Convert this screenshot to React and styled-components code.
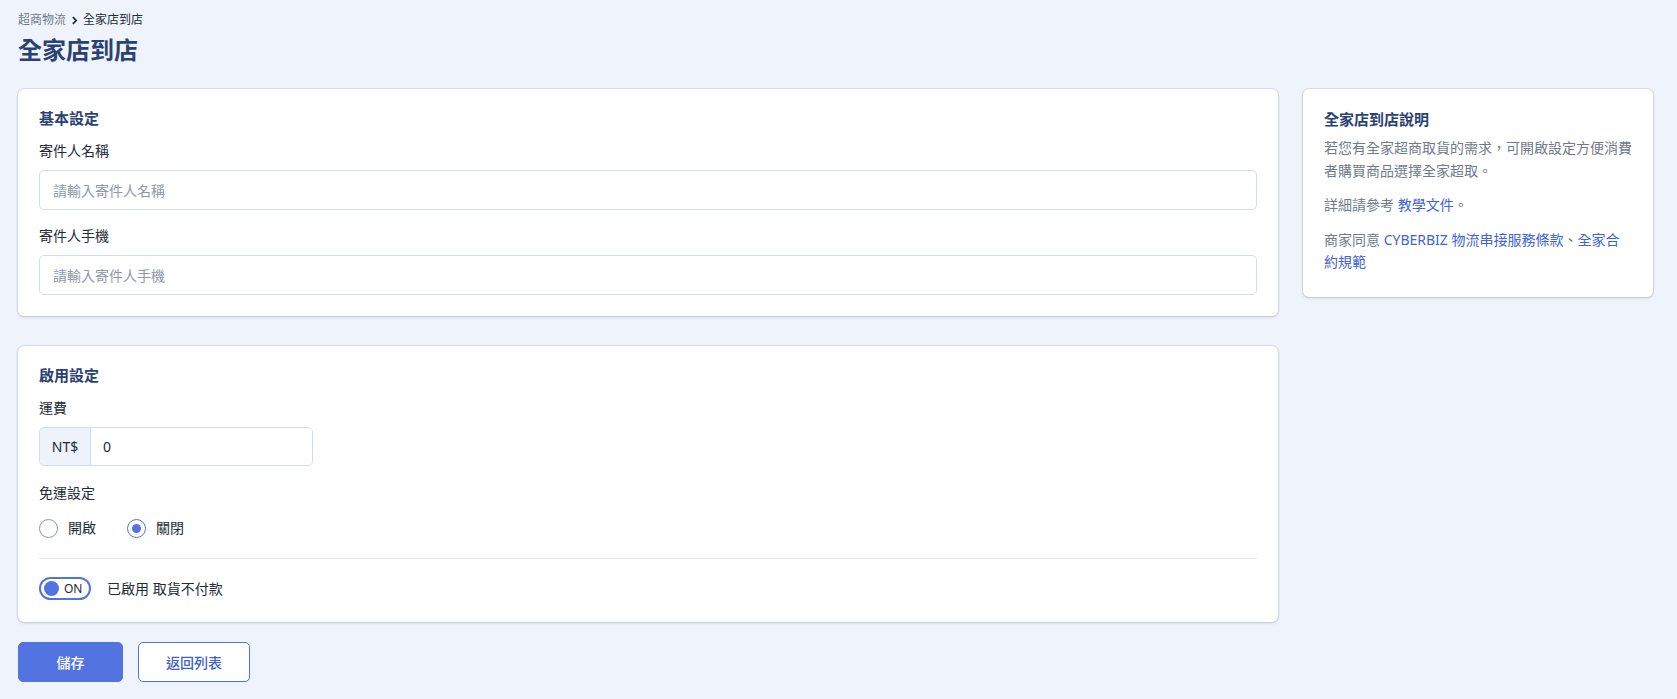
import React from 'react';
import styled, { createGlobalStyle } from 'styled-components';

const GlobalStyle = createGlobalStyle`
  * {
    box-sizing: border-box;
  }
  body {
    margin: 0;
    background: #eff4fc;
    font-family: "Noto Sans", "Noto Sans CJK TC", sans-serif;
    color: #222b38;
  }
`;

const App = () => {
  return (
    <>
      <GlobalStyle />
      <Page>
        <Breadcrumb>
          <CrumbLink href="#">超商物流</CrumbLink>
          <Chevron viewBox="0 0 10 10">
            <path d="M3.5 2 L6.5 5 L3.5 8" />
          </Chevron>
          <span>全家店到店</span>
        </Breadcrumb>
        <Title>全家店到店</Title>
        <Layout>
          <MainColumn>
            <Card>
              <CardTitle>基本設定</CardTitle>
              <Field $gap={10}>
                <Label>寄件人名稱</Label>
                <TextInput placeholder="請輸入寄件人名稱" />
              </Field>
              <Field $gap={15}>
                <Label>寄件人手機</Label>
                <TextInput placeholder="請輸入寄件人手機" />
              </Field>
            </Card>

            <Card $bottom={22}>
              <CardTitle>啟用設定</CardTitle>
              <Field>
                <Label>運費</Label>
                <InputGroup>
                  <Addon>NT$</Addon>
                  <GroupInput defaultValue="0" />
                </InputGroup>
              </Field>
              <Field $gap={16}>
                <Label>免運設定</Label>
                <RadioRow>
                  <RadioOption>
                    <RadioCircle />
                    開啟
                  </RadioOption>
                  <RadioOption>
                    <RadioCircle $checked />
                    關閉
                  </RadioOption>
                </RadioRow>
              </Field>
              <Divider />
              <ToggleRow>
                <Toggle>
                  <Knob />
                  ON
                </Toggle>
                <span>已啟用 取貨不付款</span>
              </ToggleRow>
            </Card>

            <Actions>
              <PrimaryButton>儲存</PrimaryButton>
              <OutlineButton>返回列表</OutlineButton>
            </Actions>
          </MainColumn>

          <SideCard>
            <CardTitle>全家店到店說明</CardTitle>
            <Note $first>若您有全家超商取貨的需求，可開啟設定方便消費者購買商品選擇全家超取。</Note>
            <Note>
              詳細請參考 <NoteLink href="#">教學文件</NoteLink>。
            </Note>
            <Note>
              商家同意 <NoteLink href="#">CYBERBIZ 物流串接服務條款</NoteLink>、<NoteLink href="#">全家合約規範</NoteLink>
            </Note>
          </SideCard>
        </Layout>
      </Page>
    </>
  );
};

const Page = styled.div`
  padding: 11px 24px 18px 18px;
`;

const Breadcrumb = styled.div`
  display: flex;
  align-items: center;
  gap: 3px;
  font-size: 12px;
  line-height: 18px;
  color: #222b38;
`;

const CrumbLink = styled.a`
  color: #6f7989;
  text-decoration: none;
`;

const Chevron = styled.svg`
  width: 11px;
  height: 11px;
  fill: none;
  stroke: #222b38;
  stroke-width: 1.6;
`;

const Title = styled.h1`
  margin: 5px 0 23px;
  font-size: 24px;
  line-height: 32px;
  font-weight: 700;
  color: #2a4273;
`;

const Layout = styled.div`
  display: grid;
  grid-template-columns: 1fr 350px;
  gap: 25px;
  align-items: start;
`;

const MainColumn = styled.div`
  display: flex;
  flex-direction: column;
  gap: 30px;
`;

const Card = styled.section`
  background: #fff;
  border-radius: 6px;
  box-shadow: 0 0 0 1px rgba(30, 40, 60, 0.08), 0 1px 3px rgba(30, 40, 60, 0.18);
  padding: 17px 21px ${(p) => p.$bottom ?? 21}px;
`;

const SideCard = styled(Card)`
  padding: 18px 21px 23px;
`;

const CardTitle = styled.h2`
  margin: 0;
  font-size: 15px;
  line-height: 24px;
  font-weight: 700;
  color: #2a4273;
`;

const Field = styled.div`
  display: flex;
  flex-direction: column;
  gap: 8px;
  margin-top: ${(p) => p.$gap ?? 10}px;
`;

const Label = styled.label`
  font-size: 14px;
  line-height: 22px;
  color: #222b38;
`;

const TextInput = styled.input`
  height: 40px;
  width: 100%;
  border: 1px solid #d3dcef;
  border-radius: 5px;
  padding: 0 13px;
  font-family: inherit;
  font-size: 14px;
  color: #222b38;
  outline: none;
  &::placeholder {
    color: #8e98aa;
  }
`;

const InputGroup = styled.div`
  display: flex;
  width: 274px;
  height: 39px;
  border: 1px solid #d3dcef;
  border-radius: 5px;
  overflow: hidden;
`;

const Addon = styled.span`
  display: flex;
  align-items: center;
  justify-content: center;
  width: 51px;
  background: #eef3fb;
  border-right: 1px solid #d3dcef;
  font-size: 14px;
  color: #222b38;
`;

const GroupInput = styled.input`
  flex: 1;
  min-width: 0;
  border: none;
  padding: 0 12px;
  font-family: inherit;
  font-size: 14px;
  color: #222b38;
  outline: none;
`;

const RadioRow = styled.div`
  display: flex;
  gap: 31px;
  margin-top: 5px;
`;

const RadioOption = styled.label`
  display: flex;
  align-items: center;
  gap: 10px;
  font-size: 14px;
  line-height: 22px;
`;

const RadioCircle = styled.span`
  position: relative;
  width: 19px;
  height: 19px;
  border-radius: 50%;
  border: 1px solid ${(p) => (p.$checked ? '#5273e0' : '#8e98aa')};
  &::after {
    content: '';
    display: ${(p) => (p.$checked ? 'block' : 'none')};
    position: absolute;
    inset: 4px;
    border-radius: 50%;
    background: #5273e0;
  }
`;

const Divider = styled.hr`
  margin: 19px 0 18px;
  border: none;
  border-top: 1px solid #e3e7ee;
`;

const ToggleRow = styled.div`
  display: flex;
  align-items: center;
  gap: 16px;
  font-size: 14px;
  line-height: 22px;
`;

const Toggle = styled.span`
  display: flex;
  align-items: center;
  gap: 5px;
  width: 52px;
  height: 23px;
  padding: 0 3px;
  border: 2px solid #5273e0;
  border-radius: 12px;
  font-size: 12px;
  color: #222b38;
`;

const Knob = styled.span`
  width: 15px;
  height: 15px;
  border-radius: 50%;
  background: #5273e0;
`;

const Actions = styled.div`
  display: flex;
  gap: 15px;
  margin-top: -10px;
`;

const BaseButton = styled.button`
  height: 40px;
  border-radius: 5px;
  font-family: inherit;
  font-size: 14px;
  font-weight: 500;
  cursor: pointer;
`;

const PrimaryButton = styled(BaseButton)`
  width: 105px;
  background: #5273e0;
  border: 1px solid #5273e0;
  color: #fff;
`;

const OutlineButton = styled(BaseButton)`
  width: 112px;
  background: #fff;
  border: 1px solid #5273e0;
  color: #3d5fd6;
`;

const Note = styled.p`
  margin: ${(p) => (p.$first ? 6 : 12)}px 0 0;
  font-size: 14px;
  line-height: 22.5px;
  color: #707a8a;
`;

const NoteLink = styled.a`
  color: #3d63dd;
  text-decoration: none;
`;

export default App;
